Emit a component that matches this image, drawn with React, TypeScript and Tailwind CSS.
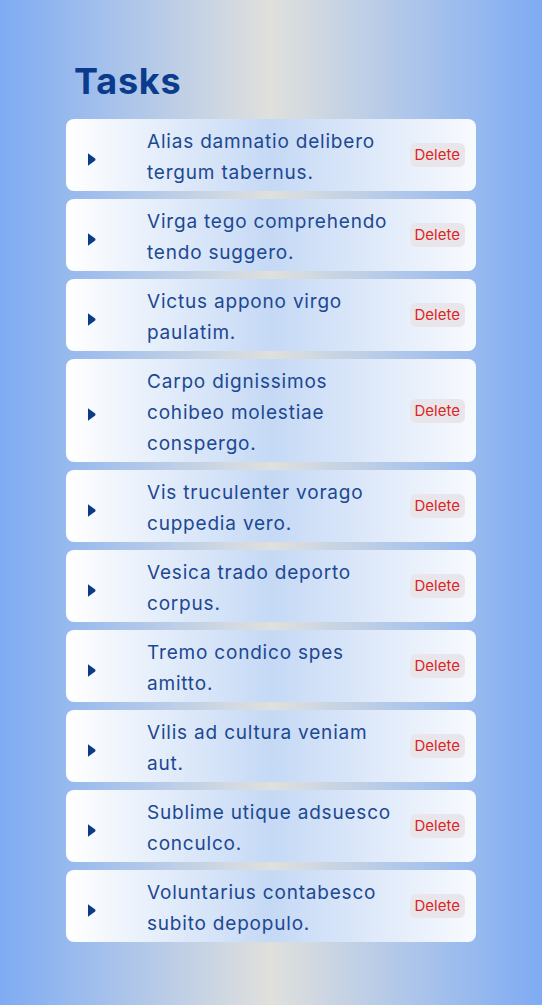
const tasks = [
  "Alias damnatio delibero tergum tabernus.",
  "Virga tego comprehendo tendo suggero.",
  "Victus appono virgo paulatim.",
  "Carpo dignissimos cohibeo molestiae conspergo.",
  "Vis truculenter vorago cuppedia vero.",
  "Vesica trado deporto corpus.",
  "Tremo condico spes amitto.",
  "Vilis ad cultura veniam aut.",
  "Sublime utique adsuesco conculco.",
  "Voluntarius contabesco subito depopulo.",
]

function Caret() {
  return (
    <svg width="9" height="15" viewBox="0 0 9 15" className="shrink-0 translate-y-[4px]">
      <path d="M1 1.2 L8.2 6.6 Q8.8 7.5 8.2 8.4 L1 13.8 Z" fill="#0b3a86" />
    </svg>
  )
}

export default function App() {
  return (
    <div
      className="min-h-screen w-full bg-gradient-to-r from-[#7eabf3] via-[#e0e0dc] to-[#7eabf3]"
      style={{ fontFamily: "Inter, 'Noto Sans', sans-serif" }}
    >
      <div className="mx-auto w-[410px] pt-[57px] pb-10">
        <h1 className="pl-[8px] text-[36px] leading-[48px] font-bold text-[#0a3b8c] tracking-[0.8px]">
          Tasks
        </h1>
        <ul className="mt-[14px] flex flex-col gap-2">
          {tasks.map((t) => (
            <li
              key={t}
              className="flex items-center rounded-lg bg-gradient-to-r from-white via-[#c5d9f5] to-[#f8fafe] pl-[21px] pr-[11px] py-[5px]"
            >
              <Caret />
              <span className="ml-[51px] flex-1 translate-y-[2px] text-[19px] leading-[31px] tracking-[0.8px] text-[#1d4892]">
                {t}
              </span>
              <button className="ml-3 h-6 rounded-md bg-[#e8e6ea] px-[5px] text-[15px] leading-6 text-[#dc2626]">
                Delete
              </button>
            </li>
          ))}
        </ul>
      </div>
    </div>
  )
}
